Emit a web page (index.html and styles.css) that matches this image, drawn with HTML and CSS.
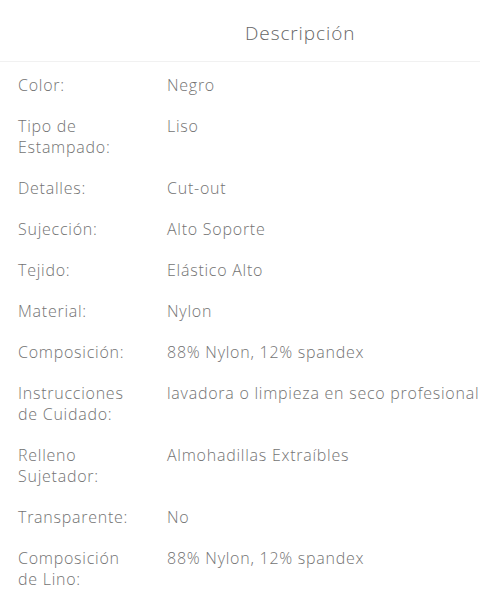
FILE: index.html
```html
<!DOCTYPE html>
<html lang="es">
<head>
<meta charset="utf-8">
<link rel="stylesheet" href="styles.css">
</head>
<body>
<div class="sheet">
  <header class="header"><h1 class="title">Descripción</h1></header>
  <dl class="specs">
    <div class="row"><dt>Color:</dt><dd>Negro</dd></div>
    <div class="row"><dt>Tipo de Estampado:</dt><dd>Liso</dd></div>
    <div class="row"><dt>Detalles:</dt><dd>Cut-out</dd></div>
    <div class="row"><dt>Sujección:</dt><dd>Alto Soporte</dd></div>
    <div class="row"><dt>Tejido:</dt><dd>Elástico Alto</dd></div>
    <div class="row"><dt>Material:</dt><dd>Nylon</dd></div>
    <div class="row"><dt>Composición:</dt><dd>88% Nylon, 12% spandex</dd></div>
    <div class="row"><dt>Instrucciones de Cuidado:</dt><dd>lavadora o limpieza en seco profesional</dd></div>
    <div class="row"><dt>Relleno Sujetador:</dt><dd>Almohadillas Extraíbles</dd></div>
    <div class="row"><dt>Transparente:</dt><dd>No</dd></div>
    <div class="row"><dt>Composición de Lino:</dt><dd>88% Nylon, 12% spandex</dd></div>
  </dl>
</div>
</body>
</html>
```
FILE: styles.css
```css
html, body {
  margin: 0;
  padding: 0;
  background: #ffffff;
}
body {
  font-family: "Open Sans", "Noto Sans", sans-serif;
  font-weight: 300;
  color: #737373;
  overflow: hidden;
  width: 480px;
  height: 600px;
}
.sheet {
  width: 480px;
  overflow: hidden;
}
.header {
  height: 62px;
  border-bottom: 1px solid #f1f1f1;
  display: flex;
  align-items: center;
  padding: 4px 0 0 245px;
  box-sizing: border-box;
}
.title {
  margin: 0;
  font-size: 19px;
  font-weight: 300;
  color: #666666;
  letter-spacing: 0.9px;
  white-space: nowrap;
}
.specs {
  margin: 0;
  padding: 13px 0 0 18px;
  display: flex;
  flex-direction: column;
  gap: 20px;
}
.row {
  display: flex;
  font-size: 16px;
  line-height: 21px;
  letter-spacing: 0.75px;
}
.row dt {
  width: 116px;
  margin-right: 33px;
  flex-shrink: 0;
}
.row dd {
  margin: 0;
  white-space: nowrap;
}
```
